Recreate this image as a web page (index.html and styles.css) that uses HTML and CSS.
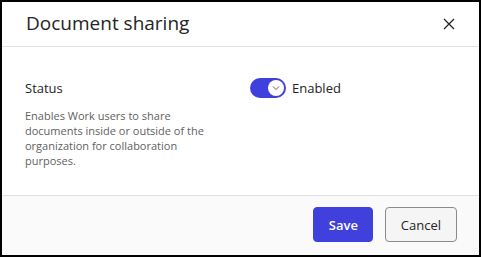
FILE: index.html
```html
<!DOCTYPE html>
<html lang="en">
<head>
    <meta charset="UTF-8">
    <meta name="viewport" content="width=device-width, initial-scale=1.0">
    <title>Document sharing</title>
    <link rel="stylesheet" href="styles.css">
</head>
<body>
    <div class="dialog">
        <div class="dialog-header">
            <h1>Document sharing</h1>
            <button class="close-button" aria-label="Close">
                <svg width="12" height="12" viewBox="0 0 12 12">
                    <path d="M1 1 L11 11 M11 1 L1 11" stroke="#242424" stroke-width="1.3" fill="none"/>
                </svg>
            </button>
        </div>

        <div class="dialog-body">
            <div class="setting-info">
                <div class="setting-label">Status</div>
                <p class="setting-desc">Enables Work users to share documents inside or outside of the organization for collaboration purposes.</p>
            </div>
            <div class="setting-control">
                <span class="toggle on">
                    <span class="toggle-thumb">
                        <svg width="8" height="6" viewBox="0 0 8 6">
                            <path d="M1 1.5 L4 4.5 L7 1.5" stroke="#616161" stroke-width="1" fill="none"/>
                        </svg>
                    </span>
                </span>
                <span class="toggle-text">Enabled</span>
            </div>
        </div>

        <div class="dialog-footer">
            <button class="btn primary">Save</button>
            <button class="btn">Cancel</button>
        </div>
    </div>
</body>
</html>
```

FILE: styles.css
```css
* {
    margin: 0;
    padding: 0;
    box-sizing: border-box;
}

body {
    font-family: 'Segoe UI', 'Open Sans', Arial, sans-serif;
    color: #242424;
    background: white;
}

.dialog {
    width: 481px;
    height: 257px;
    border: 2px solid #000;
    display: flex;
    flex-direction: column;
    background: white;
}

.dialog-header {
    height: 45px;
    padding: 0 20px 0 24px;
    display: flex;
    align-items: center;
    justify-content: space-between;
    border-bottom: 1px solid #e0e0e0;
}

.dialog-header h1 {
    font-size: 19px;
    font-weight: normal;
    color: #242424;
    margin-top: -2px;
}

.close-button {
    background: none;
    border: none;
    width: 20px;
    height: 20px;
    display: flex;
    align-items: center;
    justify-content: center;
    cursor: pointer;
}

.dialog-body {
    flex: 1;
    display: flex;
    padding: 32px 24px 0 23px;
}

.setting-info {
    width: 225px;
}

.setting-label {
    font-size: 13px;
    line-height: 18px;
    color: #242424;
}

.setting-desc {
    max-width: 192px;
    margin-top: 11px;
    font-size: 11px;
    line-height: 15px;
    color: #616161;
}

.setting-control {
    display: flex;
    align-items: center;
    gap: 6px;
    height: 20px;
    margin-top: -1px;
}

.toggle {
    width: 36px;
    height: 20px;
    border-radius: 10px;
    background: #4040dd;
    display: flex;
    align-items: center;
    justify-content: flex-end;
    padding: 0 2px;
}

.toggle-thumb {
    width: 16px;
    height: 16px;
    border-radius: 50%;
    background: white;
    display: flex;
    align-items: center;
    justify-content: center;
}

.toggle-text {
    font-size: 13px;
    color: #242424;
}

.dialog-footer {
    height: 60px;
    background: #fafafa;
    border-top: 1px solid #e0e0e0;
    display: flex;
    justify-content: flex-end;
    align-items: flex-start;
    gap: 12px;
    padding: 11px 22px 0 0;
}

.btn {
    height: 35px;
    padding: 0 15px;
    border: 1px solid #8a8a8a;
    border-radius: 4px;
    background: #f5f5f5;
    font-family: inherit;
    font-size: 13px;
    color: #242424;
    cursor: pointer;
}

.btn.primary {
    width: 60px;
    background: #4040dd;
    border-color: #4040dd;
    color: white;
    font-weight: 600;
}
```
